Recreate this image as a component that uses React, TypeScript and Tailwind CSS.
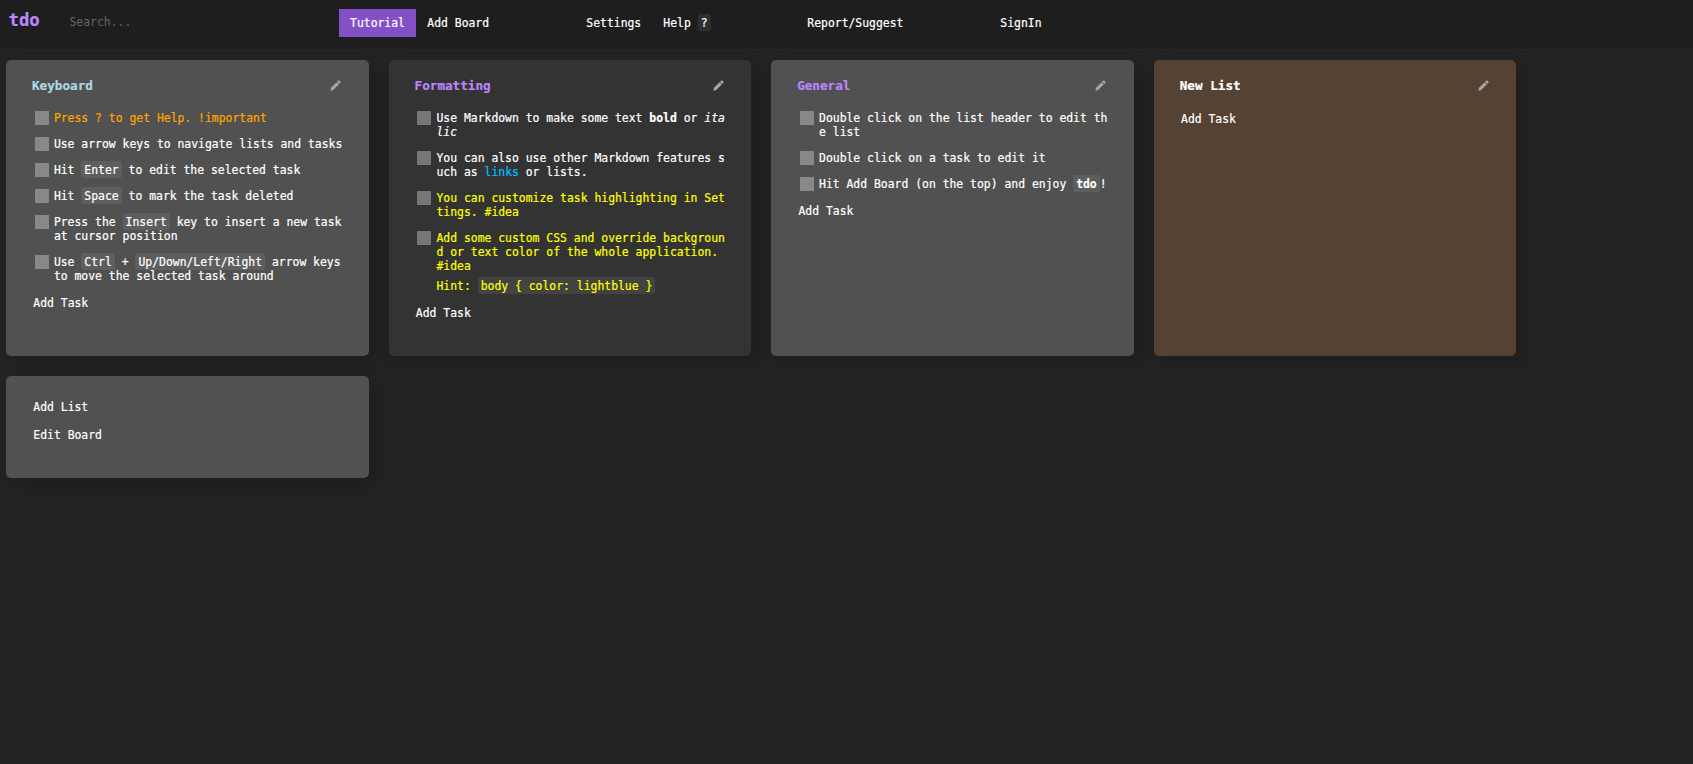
import type { ReactNode } from 'react';

function Code({ children }: { children: ReactNode }) {
  return <code className="rounded-[2px] bg-white/8 px-[3px] pb-[1px] pt-[2px] [font-family:inherit] text-[11.41px]">{children}</code>;
}

function Pencil() {
  return (
    <svg viewBox="0 0 11 11" className="mt-[5px] h-[11px] w-[11px] fill-[#a6a6a6]">
      <path d="M0.3 10.7 L1 7.8 L6.6 2.2 L8.8 4.4 L3.2 10 Z M7 1.8 L8.1 0.7 Q8.8 0 9.5 0.7 L10.3 1.5 Q11 2.2 10.3 2.9 L9.2 4 Z" />
    </svg>
  );
}

type Item = { color?: string; body: ReactNode };

function Task({ color = 'text-white', body, box }: Item & { box: string }) {
  return (
    <li className="flex gap-[5px]">
      <span className={`h-[14px] w-[14px] shrink-0 ${box}`} />
      <div className={`whitespace-pre ${color}`}>{body}</div>
    </li>
  );
}

function List({ title, titleColor, bg, box, items }: { title: string; titleColor: string; bg: string; box: string; items: Item[] }) {
  return (
    <section className={`h-[296px] rounded-[5px] pl-[26px] pr-[27.5px] pt-[15px] shadow-[8px_8px_16px_rgba(0,0,0,0.16)] ${bg}`}>
      <header className="flex h-[36px] justify-between">
        <h2 className={`pt-px text-[12.65px] font-bold leading-[20px] ${titleColor}`}>{title}</h2>
        <Pencil />
      </header>
      <ul className="flex flex-col gap-[12px] pl-[2.9px]">
        {items.map((item, i) => (
          <Task key={i} box={box} {...item} />
        ))}
      </ul>
      <button className={`block pl-[1.3px] ${items.length ? 'mt-[13px]' : 'mt-px'}`}>Add Task</button>
    </section>
  );
}

const keyboard: Item[] = [
  { color: 'text-[#ffa500]', body: 'Press ? to get Help. !important' },
  { body: 'Use arrow keys to navigate lists and tasks' },
  { body: <>Hit <Code>Enter</Code> to edit the selected task</> },
  { body: <>Hit <Code>Space</Code> to mark the task deleted</> },
  { body: <>Press the <Code>Insert</Code> key to insert a new task<br />at cursor position</> },
  { body: <>Use <Code>Ctrl</Code> + <Code>Up/Down/Left/Right</Code> arrow keys<br />to move the selected task around</> },
];

const formatting: Item[] = [
  { body: <>Use Markdown to make some text <b>bold</b> or <i>ita<br />lic</i></> },
  { body: <>You can also use other Markdown features s<br />uch as <a className="text-[#00bfff]">links</a> or lists.</> },
  { color: 'text-[#ffff00]', body: <>You can customize task highlighting in Set<br />tings. #idea</> },
  {
    color: 'text-[#ffff00]',
    body: (
      <>
        <p>Add some custom CSS and override backgroun<br />d or text color of the whole application.<br />#idea</p>
        <p className="mt-[6px]">Hint: <Code>{'body { color: lightblue }'}</Code></p>
      </>
    ),
  },
];

const general: Item[] = [
  { body: <>Double click on the list header to edit th<br />e list</> },
  { body: 'Double click on a task to edit it' },
  { body: <>Hit Add Board (on the top) and enjoy <Code><b>tdo</b></Code>!</> },
];

export default function App() {
  return (
    <div className="min-h-screen bg-[#232323] font-['DejaVu_Sans_Mono',monospace] text-[11.41px] leading-[14px] text-white [-webkit-text-stroke:0.2px]">
      <nav className="flex h-[50px] items-start whitespace-pre border-b border-[#272727] bg-[#1e1e1e] pt-[9px]">
        <div className="w-[61px] pl-[8.5px] pt-[1px] text-[17.3px] font-bold leading-[20px] text-[#bb86fc]">tdo</div>
        <input placeholder="Search..." className="ml-[8.5px] mt-[6px] h-[14px] w-[200px] bg-transparent outline-none [-webkit-text-stroke:0px] placeholder:text-[#666]" />
        <div className="ml-[69.5px] flex h-[28px] w-[77px] items-center justify-center bg-[#8350c8]">Tutorial</div>
        <div className="ml-[11.3px] w-[159px] leading-[28px]">Add Board</div>
        <div className="w-[77px] leading-[28px]">Settings</div>
        <div className="w-[144px] leading-[28px]">Help <Code>?</Code></div>
        <div className="w-[193px] leading-[28px]">Report/Suggest</div>
        <div className="leading-[28px]">SignIn</div>
      </nav>
      <main className="grid w-[1516.3px] grid-cols-4 gap-[20px] pl-[6px] pt-[10px]">
        <List title="Keyboard" titleColor="text-[#add8e6]" bg="bg-[#515151]" box="bg-[#888888]" items={keyboard} />
        <List title="Formatting" titleColor="text-[#bb86fc]" bg="bg-[#333333]" box="bg-[#777777]" items={formatting} />
        <List title="General" titleColor="text-[#bb86fc]" bg="bg-[#515151]" box="bg-[#888888]" items={general} />
        <List title="New List" titleColor="text-white" bg="bg-[#554232]" box="bg-[#888888]" items={[]} />
        <section className="flex h-[102px] flex-col items-start gap-[14px] rounded-[5px] bg-[#515151] pl-[27.3px] pt-[24px] shadow-[8px_8px_16px_rgba(0,0,0,0.16)]">
          <button>Add List</button>
          <button>Edit Board</button>
        </section>
      </main>
    </div>
  );
}
